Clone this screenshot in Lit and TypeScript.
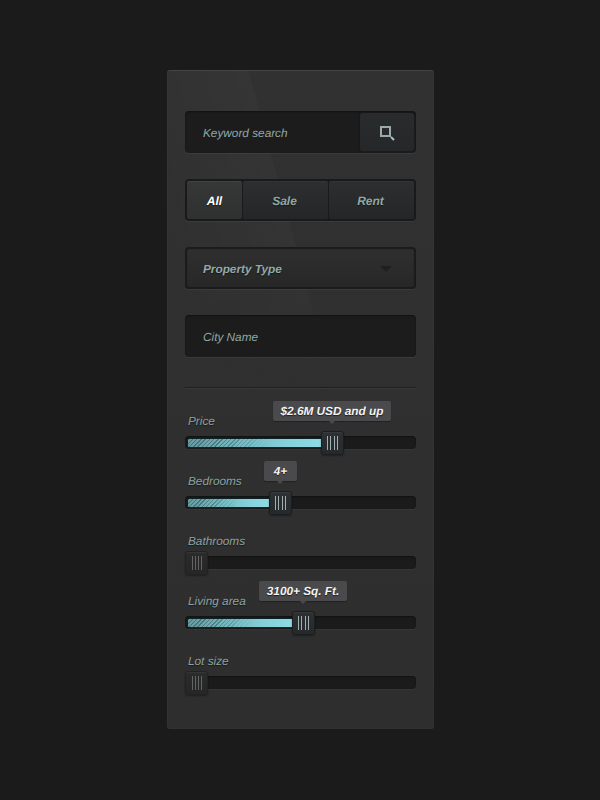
import { LitElement, html, css, nothing, type TemplateResult } from 'lit';
import { customElement, property } from 'lit/decorators.js';

const FONT = css`"Liberation Sans", Arial, sans-serif`;

@customElement('range-row')
export class RangeRow extends LitElement {
  static styles = css`
    :host { display: block; height: 60px; text-rendering: geometricPrecision; }

    .label {
      display: block;
      height: 25px;
      padding: 3px 0 0 3px;
      box-sizing: border-box;
      font: italic 11.8px/14px ${FONT};
      color: #8fa3a2;
      text-shadow: 0 1px 1px rgba(0,0,0,.5);
    }

    .track {
      position: relative;
      height: 13px;
      border-radius: 4px;
      background: #1b1b1c;
      box-shadow: inset 0 1px 2px rgba(0,0,0,.4), 0 1px 1px rgba(255,255,255,.04);
    }

    .fill {
      position: absolute;
      left: 3px;
      top: 3px;
      bottom: 2px;
      overflow: hidden;
      border-radius: 1px 0 0 1px;
      background: linear-gradient(90deg, #659aa0 0, #74b8bf 35%, #86d1da 75%, #8ddbe4 100%);
      box-shadow: -1px 0 1px #0e2529, 0 -1px 1px #0e2529, 0 1px 0 #16292c;
    }
    .fill::before {
      content: '';
      position: absolute;
      inset: 0;
      background: repeating-linear-gradient(135deg, rgba(30,50,54,.4) 0 1px, rgba(30,50,54,0) 1px 3px);
      -webkit-mask-image: linear-gradient(90deg, #000 0, #000 25%, transparent 62%);
      mask-image: linear-gradient(90deg, #000 0, #000 25%, transparent 62%);
    }

    .thumb {
      position: absolute;
      top: -5px;
      width: 23px;
      height: 24px;
      box-sizing: border-box;
      display: flex;
      align-items: center;
      justify-content: center;
      gap: 2.3px;
      border-radius: 3px;
      border: 1px solid #1c1d1e;
      background: linear-gradient(180deg, #2e3133, #26292b);
      box-shadow: inset 0 1px 0 rgba(255,255,255,.05), 0 1px 2px rgba(0,0,0,.35);
    }
    .thumb.idle { gap: 2px; background: linear-gradient(180deg, #2b2b2c, #262627); border-color: #222223; }

    .thumb i {
      display: block;
      width: 1px;
      height: 14px;
      background: #a3aeb0;
    }
    .thumb.idle i { background: #626566; }

    .tip {
      position: absolute;
      top: -35px;
      height: 20px;
      box-sizing: border-box;
      border-radius: 2px;
      background: #4a4a4c;
      box-shadow: 0 1px 1px rgba(0,0,0,.3);
      color: #f4f4f4;
      font: italic bold 11.8px/20px ${FONT};
      text-align: center;
      white-space: nowrap;
      text-shadow: 0 1px 1px rgba(0,0,0,.6);
    }
    .tip::after {
      content: '';
      position: absolute;
      left: var(--tail);
      top: 100%;
      margin-left: -3px;
      border: 3px solid transparent;
      border-top-color: #4a4a4c;
    }
  `;

  @property() label = '';
  @property({ type: Number }) thumbAt = 0;
  @property() tip = '';
  @property({ type: Number }) tipAt = 0;
  @property({ type: Number }) tipWidth = 0;

  render(): TemplateResult {
    const active = this.thumbAt > 0;
    const tail = this.thumbAt + 11 - this.tipAt;
    return html`
      <span class="label">${this.label}</span>
      <div class="track">
        ${active ? html`<div class="fill" style="width:${this.thumbAt - 3}px"></div>` : nothing}
        <div class="thumb ${active ? '' : 'idle'}" style="left:${this.thumbAt}px"><i></i><i></i><i></i><i></i></div>
        ${this.tip
          ? html`<div class="tip" style="left:${this.tipAt}px;width:${this.tipWidth}px;--tail:${tail}px">${this.tip}</div>`
          : nothing}
      </div>
    `;
  }
}

@customElement('app-root')
export class AppRoot extends LitElement {
  static styles = css`
    :host {
      display: block;
      height: 800px;
      padding-top: 70px;
      box-sizing: border-box;
      background: #1b1b1c;
      font-family: ${FONT};
      text-rendering: geometricPrecision;
    }

    .panel {
      position: relative;
      isolation: isolate;
      width: 267px;
      height: 659px;
      margin-left: 167px;
      padding: 41px 18px 0;
      box-sizing: border-box;
      border-radius: 3px;
      background: linear-gradient(180deg, #313132, #2e2e2f);
      box-shadow: inset 0 1px 0 rgba(255,255,255,.07), inset 0 0 0 1px rgba(255,255,255,.02);
    }
    /* faint sheen across the upper half of the panel */
    .panel::before {
      content: '';
      position: absolute;
      inset: 0;
      z-index: -1;
      border-radius: 3px;
      background: linear-gradient(75deg, rgba(255,255,255,0) 25%, rgba(255,255,255,.018) 58%, rgba(255,255,255,0) 58.4%);
      -webkit-mask-image: linear-gradient(180deg, #000 0, #000 30%, transparent 50%);
      mask-image: linear-gradient(180deg, #000 0, #000 30%, transparent 50%);
    }

    .field {
      display: flex;
      align-items: center;
      height: 42px;
      box-sizing: border-box;
      padding-left: 18px;
      border-radius: 4px;
      margin-bottom: 26px;
      font: italic 11.8px/14px ${FONT};
      color: #90a8a6;
    }
    .field > span:first-child { margin-top: 2px; }

    .sunken {
      background: #1c1c1d;
      box-shadow: inset 0 1px 2px rgba(0,0,0,.4), 0 1px 1px rgba(255,255,255,.06);
    }

    .search { justify-content: space-between; padding-right: 2px; }

    .search-btn {
      display: flex;
      align-items: center;
      justify-content: center;
      width: 54px;
      height: 38px;
      border-radius: 3px;
      background: linear-gradient(180deg, #2a2b2c, #262728);
      box-shadow: -1px 0 1px #18181a;
    }

    .tabs {
      display: flex;
      height: 42px;
      box-sizing: border-box;
      padding: 2px;
      gap: 1px;
      margin-bottom: 26px;
      border-radius: 4px;
      background: #1a1a1b;
      box-shadow: 0 1px 1px rgba(255,255,255,.06);
    }

    .tab {
      flex: 84px 1 1;
      display: flex;
      align-items: center;
      justify-content: center;
      padding: 2px 2px 0 0;
      box-sizing: border-box;
      border-radius: 2px;
      font: italic bold 12px/14px ${FONT};
      color: #90a8a6;
      background: linear-gradient(180deg, #2d2e2f, #252627);
      box-shadow: inset 0 1px 0 rgba(255,255,255,.03);
      text-shadow: 0 1px 1px rgba(0,0,0,.5);
    }
    .tab.on {
      flex: 55px 0 0;
      padding-right: 0;
      color: #fff;
      background: linear-gradient(180deg, #363737, #2f3030);
      box-shadow: inset 0 1px 0 rgba(255,255,255,.06);
    }

    .select {
      justify-content: space-between;
      padding-right: 24px;
      font-weight: bold;
      color: #94aaa9;
      background: linear-gradient(180deg, #2f2f30, #272727);
      box-shadow: inset 0 0 1px 2px #1b1b1c, 0 1px 1px rgba(255,255,255,.06);
      text-shadow: 0 1px 1px rgba(0,0,0,.5);
    }

    .caret {
      width: 0;
      height: 0;
      margin-top: 1px;
      border: 6px solid transparent;
      border-top: 6px solid #1e1f20;
      border-bottom: 0;
    }

    .rule {
      height: 1px;
      margin: 30px 0 23px;
      background: #1f1f20;
      box-shadow: 0 1px 0 rgba(255,255,255,.05);
    }
  `;

  render(): TemplateResult {
    return html`
      <div class="panel">
        <div class="field sunken search">
          <span>Keyword search</span>
          <div class="search-btn">
            <svg width="18" height="18" viewBox="0 0 18 18" fill="none">
              <rect x="3" y="4" width="9" height="9" stroke="#9aacaa" stroke-width="2" />
              <path d="M13 14l3 3" stroke="#b4c0bf" stroke-width="2" />
            </svg>
          </div>
        </div>

        <div class="tabs">
          <div class="tab on">All</div>
          <div class="tab">Sale</div>
          <div class="tab">Rent</div>
        </div>

        <div class="field select">
          <span>Property Type</span>
          <span class="caret"></span>
        </div>

        <div class="field sunken"><span>City Name</span></div>

        <div class="rule"></div>

        <range-row label="Price" thumbAt="136" tip="$2.6M USD and up" tipAt="88" tipWidth="118"></range-row>
        <range-row label="Bedrooms" thumbAt="84" tip="4+" tipAt="79" tipWidth="33"></range-row>
        <range-row label="Bathrooms"></range-row>
        <range-row label="Living area" thumbAt="107" tip="3100+ Sq. Ft." tipAt="74" tipWidth="88"></range-row>
        <range-row label="Lot size"></range-row>
      </div>
    `;
  }
}

declare global {
  interface HTMLElementTagNameMap {
    'app-root': AppRoot;
    'range-row': RangeRow;
  }
}
